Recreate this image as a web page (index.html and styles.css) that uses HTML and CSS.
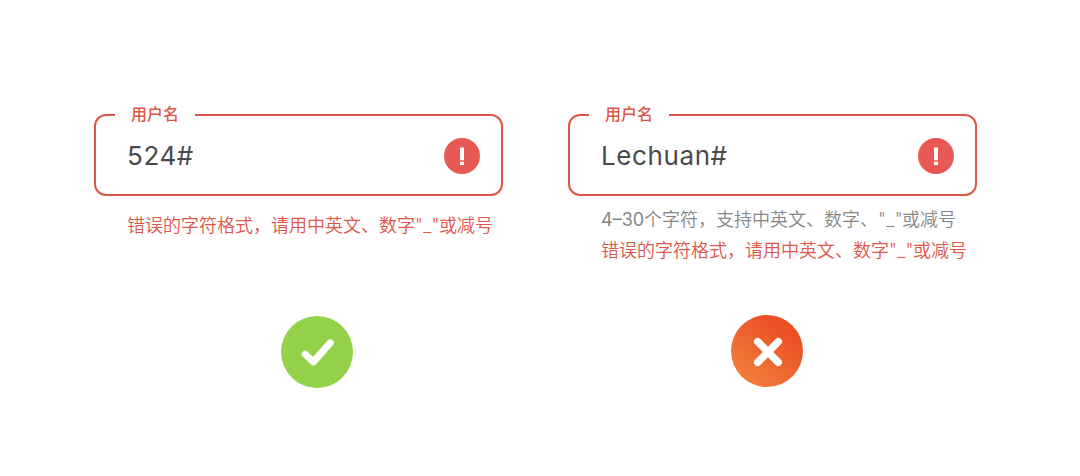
FILE: index.html
```
<!DOCTYPE html>
<html lang="zh-CN">
<head>
  <meta charset="UTF-8">
  <title>用户名</title>
  <link rel="stylesheet" href="styles.css">
</head>
<body>
  <div class="examples">
    <div class="example good">
      <fieldset class="field">
        <legend>用户名</legend>
        <span class="value">524#</span>
        <svg class="alert" viewBox="0 0 36 36">
          <circle cx="18" cy="18" r="18" fill="#e85854"/>
          <path d="M16 9.5h4v12.7h-4zM16 23.7h4v3.3h-4z" fill="#fff"/>
        </svg>
      </fieldset>
      <div class="hints">
        <p class="error">错误的字符格式，请用中英文、数字<span class="mark">"_"</span>或减号</p>
      </div>
      <svg class="badge" viewBox="0 0 72 72">
        <circle cx="36" cy="36" r="36" fill="#93d148"/>
        <path d="M24.2 38.3l8.2 7.6 16.8-19" fill="none" stroke="#fff" stroke-width="7" stroke-linecap="round" stroke-linejoin="round"/>
      </svg>
    </div>

    <div class="example bad">
      <fieldset class="field">
        <legend>用户名</legend>
        <span class="value">Lechuan#</span>
        <svg class="alert" viewBox="0 0 36 36">
          <circle cx="18" cy="18" r="18" fill="#e85854"/>
          <path d="M16 9.5h4v12.7h-4zM16 23.7h4v3.3h-4z" fill="#fff"/>
        </svg>
      </fieldset>
      <div class="hints">
        <p><span class="range">4–30</span>个字符，支持中英文、数字、<span class="mark">"_"</span>或减号</p>
        <p class="error">错误的字符格式，请用中英文、数字<span class="mark">"_"</span>或减号</p>
      </div>
      <svg class="badge" viewBox="0 0 72 72">
        <defs>
          <linearGradient id="orange" x1="0.2" y1="0.9" x2="0.75" y2="0.2">
            <stop offset="0" stop-color="#f07d3a"/>
            <stop offset="1" stop-color="#ec5026"/>
          </linearGradient>
        </defs>
        <circle cx="36" cy="36" r="36" fill="url(#orange)"/>
        <path d="M26.7 26.7l20.6 20.6M47.3 26.7l-20.6 20.6" fill="none" stroke="#fff" stroke-width="7.4" stroke-linecap="round"/>
      </svg>
    </div>
  </div>
</body>
</html>
```
FILE: styles.css
```
* {
  box-sizing: border-box;
}

body {
  margin: 0;
  background: #fff;
  font-family: "Liberation Sans", "Noto Sans CJK SC", sans-serif;
}

.examples {
  display: flex;
  gap: 65px;
  padding: 103px 0 0 94px;
}

.example {
  width: 409px;
}

.field {
  display: flex;
  align-items: center;
  justify-content: space-between;
  height: 93px;
  margin: 0;
  padding: 0 21px 10px 31px;
  border: 2px solid #de5648;
  border-radius: 12px;
}

.field legend {
  margin-left: -12px;
  padding: 0 16px;
  color: #de5648;
  font-size: 16px;
  font-weight: 500;
  line-height: 24px;
}

.value {
  color: #4a4a4a;
  font-family: Inter, sans-serif;
  font-size: 26px;
  line-height: 36px;
  letter-spacing: 0.6px;
}

.alert {
  width: 36px;
  height: 36px;
}

.hints {
  height: 62px;
  margin-top: 8px;
  padding-left: 33px;
  color: #868686;
  font-size: 18px;
  font-weight: 350;
  line-height: 31px;
  white-space: nowrap;
}

.good .hints {
  padding-top: 6px;
}

.hints p {
  height: 31px;
  margin: 0;
}

.hints .error {
  color: #de5648;
}

.mark {
  display: inline-block;
  width: 24px;
  font-family: Inter, sans-serif;
  letter-spacing: 0.3px;
}

.range {
  font-family: Inter, sans-serif;
  font-weight: 400;
}

.badge {
  display: block;
  width: 72px;
  height: 72px;
}

.good .badge {
  margin: 50px 0 0 187px;
}

.bad .badge {
  margin: 49px 0 0 163px;
}
```
